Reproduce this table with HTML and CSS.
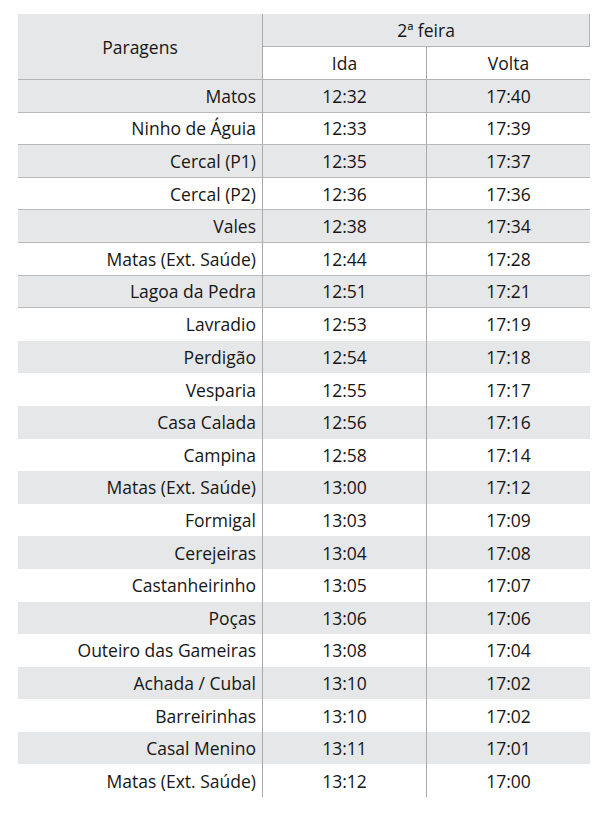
FILE: index.html
```html
<!DOCTYPE html>
<html lang="pt">
<head>
<meta charset="utf-8">
<title>Horário</title>
<link rel="stylesheet" href="styles.css">
</head>
<body>
<table class="timetable">
  <colgroup>
    <col class="c-stop">
    <col class="c-time">
    <col class="c-time2">
  </colgroup>
  <thead>
    <tr class="h1">
      <th class="stop-head" rowspan="2">Paragens</th>
      <th class="day" colspan="2">2ª feira</th>
    </tr>
    <tr class="h2">
      <th class="dir">Ida</th>
      <th class="dir dir2">Volta</th>
    </tr>
  </thead>
  <tbody>
    <tr class="g ln"><td class="s">Matos</td><td class="t">12:32</td><td class="t t2">17:40</td></tr>
    <tr class="w ln"><td class="s">Ninho de Águia</td><td class="t">12:33</td><td class="t t2">17:39</td></tr>
    <tr class="g ln"><td class="s">Cercal (P1)</td><td class="t">12:35</td><td class="t t2">17:37</td></tr>
    <tr class="w ln"><td class="s">Cercal (P2)</td><td class="t">12:36</td><td class="t t2">17:36</td></tr>
    <tr class="g ln"><td class="s">Vales</td><td class="t">12:38</td><td class="t t2">17:34</td></tr>
    <tr class="w ln"><td class="s">Matas (Ext. Saúde)</td><td class="t">12:44</td><td class="t t2">17:28</td></tr>
    <tr class="g ln"><td class="s">Lagoa da Pedra</td><td class="t">12:51</td><td class="t t2">17:21</td></tr>
    <tr class="w"><td class="s">Lavradio</td><td class="t">12:53</td><td class="t t2">17:19</td></tr>
    <tr class="g"><td class="s">Perdigão</td><td class="t">12:54</td><td class="t t2">17:18</td></tr>
    <tr class="w"><td class="s">Vesparia</td><td class="t">12:55</td><td class="t t2">17:17</td></tr>
    <tr class="g"><td class="s">Casa Calada</td><td class="t">12:56</td><td class="t t2">17:16</td></tr>
    <tr class="w"><td class="s">Campina</td><td class="t">12:58</td><td class="t t2">17:14</td></tr>
    <tr class="g"><td class="s">Matas (Ext. Saúde)</td><td class="t">13:00</td><td class="t t2">17:12</td></tr>
    <tr class="w"><td class="s">Formigal</td><td class="t">13:03</td><td class="t t2">17:09</td></tr>
    <tr class="g"><td class="s">Cerejeiras</td><td class="t">13:04</td><td class="t t2">17:08</td></tr>
    <tr class="w"><td class="s">Castanheirinho</td><td class="t">13:05</td><td class="t t2">17:07</td></tr>
    <tr class="g"><td class="s">Poças</td><td class="t">13:06</td><td class="t t2">17:06</td></tr>
    <tr class="w"><td class="s">Outeiro das Gameiras</td><td class="t">13:08</td><td class="t t2">17:04</td></tr>
    <tr class="g"><td class="s">Achada / Cubal</td><td class="t">13:10</td><td class="t t2">17:02</td></tr>
    <tr class="w"><td class="s">Barreirinhas</td><td class="t">13:10</td><td class="t t2">17:02</td></tr>
    <tr class="g"><td class="s">Casal Menino</td><td class="t">13:11</td><td class="t t2">17:01</td></tr>
    <tr class="w"><td class="s">Matas (Ext. Saúde)</td><td class="t">13:12</td><td class="t t2">17:00</td></tr>
  </tbody>
</table>
</body>
</html>
```
FILE: styles.css
```css
html, body {
  margin: 0;
  padding: 0;
  background: #ffffff;
}

body {
  padding: 14px 0 0 18px;
  font-family: "Open Sans", "Liberation Sans", sans-serif;
  font-size: 17.5px;
  color: #161616;
}

.timetable {
  border-collapse: separate;
  border-spacing: 0;
  table-layout: fixed;
  width: 572px;
}

.c-stop { width: 245px; }
.c-time { width: 163px; }
.c-time2 { width: 164px; }

th, td {
  padding: 0;
  font-weight: 400;
  line-height: 20px;
  white-space: nowrap;
}

.h1 { height: 33px; }
.h2 { height: 33px; }

.stop-head {
  background: #e6e7e8;
  text-align: center;
  border-right: 1px solid #a9a9a9;
  border-bottom: 1px solid #b4b4b4;
}

.day {
  background: #e6e7e8;
  text-align: center;
  border-bottom: 1px solid #b4b4b4;
  border-right: 1px solid #b4b4b4;
}

.dir {
  background: #ffffff;
  text-align: center;
  border-bottom: 1px solid #b4b4b4;
}

.dir2 {
  border-left: 1px solid #a9a9a9;
}

tbody tr {
  height: 32.6px;
}

tr.g td { background: #e6e7e8; }
tr.w td { background: #ffffff; }

tr.ln td {
  border-bottom: 1px solid #b9b9b9;
}

td.s {
  text-align: right;
  padding-right: 6px;
  border-right: 1px solid #a9a9a9;
}

td.t {
  text-align: center;
}

td.t2 {
  border-left: 1px solid #a9a9a9;
}
```
